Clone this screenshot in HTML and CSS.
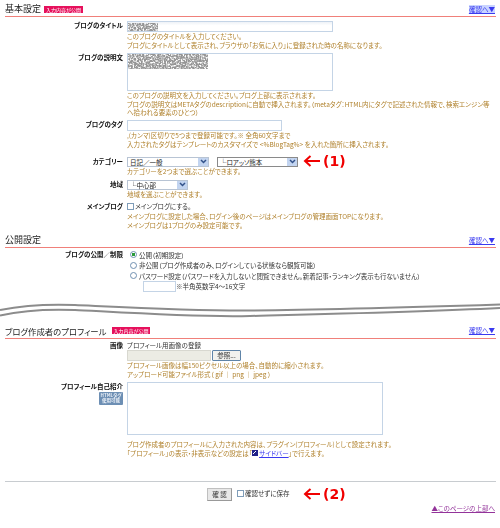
FILE: index.html
```html
<!DOCTYPE html>
<html lang="ja">
<head>
<meta charset="utf-8">
<title>基本設定</title>
<link rel="stylesheet" href="styles.css">
</head>
<body>
<div class="page">
  <div class="head h1"><h2>基本設定</h2><span class="badge">入力内容が公開</span><a class="more hl" href="#">確認へ▼</a></div>

  <div class="row r-title"><div class="lab">ブログのタイトル</div><div class="val">
    <div class="field f-title"><svg class="noise n1" width="30" height="8"><rect width="30" height="8" filter="url(#nz)"/></svg></div>
    <p class="hint">このブログのタイトルを入力してください。<br>ブログにタイトルとして表示され、ブラウザの「お気に入り」に登録された時の名称になります。</p>
  </div></div>

  <div class="row r-desc"><div class="lab">ブログの説明文</div><div class="val">
    <div class="field f-desc"><svg class="noise n2" width="80" height="15"><rect width="80" height="15" filter="url(#nz)"/></svg></div>
    <p class="hint">このブログの説明文を入力してください。ブログ上部に表示されます。<br>ブログの説明文はMETAタグのdescriptionに自動で挿入されます。（metaタグ：HTML内にタグで記述された情報で、検索エンジン等<br>へ拾われる要素のひとつ）</p>
  </div></div>

  <div class="row r-tag"><div class="lab">ブログのタグ</div><div class="val">
    <div class="field f-tag"></div>
    <p class="hint">,(カンマ)区切りで5つまで登録可能です。※ 全角60文字まで<br>入力されたタグはテンプレートのカスタマイズで &lt;%BlogTag%&gt; を入れた箇所に挿入されます。</p>
  </div></div>

  <div class="row r-cat"><div class="lab">カテゴリー</div><div class="val">
    <div class="selects">
      <div class="sel s-a"><span>日記／一般</span><i><svg width="7" height="5"><path d="M1 1l2.500 2.500L6 1" fill="none" stroke="#33528a" stroke-width="1.500"/></svg></i></div>
      <div class="sel s-b"><span>└ロアッソ熊本</span><i><svg width="7" height="5"><path d="M1 1l2.500 2.500L6 1" fill="none" stroke="#33528a" stroke-width="1.500"/></svg></i></div>
    </div>
    <p class="hint">カテゴリーを2つまで選ぶことができます。</p>
    <div class="note n-one"><svg width="18" height="12" viewBox="0 0 18 12"><path d="M17 6H3M7.500 1L2 6l5.500 5" fill="none" stroke="#f00000" stroke-width="2"/></svg><b>(1)</b></div>
  </div></div>

  <div class="row r-area"><div class="lab">地域</div><div class="val">
    <div class="sel s-c"><span>└中心部</span><i><svg width="7" height="5"><path d="M1 1l2.500 2.500L6 1" fill="none" stroke="#33528a" stroke-width="1.500"/></svg></i></div>
    <p class="hint">地域を選ぶことができます。</p>
  </div></div>

  <div class="row r-main"><div class="lab">メインブログ</div><div class="val">
    <div class="check"><span class="box"></span>メインブログにする。</div>
    <p class="hint">メインブログに設定した場合、ログイン後のページはメインブログの管理画面TOPになります。<br>メインブログは1ブログのみ設定可能です。</p>
  </div></div>

  <div class="head h2"><h2>公開設定</h2><a class="more" href="#">確認へ▼</a></div>

  <div class="row r-pub"><div class="lab">ブログの公開／制限</div><div class="val">
    <div class="radio"><span class="dot on"></span>公開（初期設定）</div>
    <div class="radio"><span class="dot"></span>非公開（ブログ作成者のみ、ログインしている状態なら観覧可能）</div>
    <div class="radio"><span class="dot"></span>パスワード設定（パスワードを入力しないと閲覧できません。新着記事・ランキング表示も行ないません）</div>
    <div class="pass"><div class="field f-pass"></div>※半角英数字4～16文字</div>
  </div></div>

  <svg class="wave" width="500" height="16" viewBox="0 0 500 16">
    <path d="M0 7C20 3 50 1 75 2S190 8 250 7.500 420 4 500 1.500" fill="none" stroke="#8c8c8c" stroke-width="2"/>
    <path d="M0 12.500C20 8 50 6 75 7S190 14.500 250 13 420 9 500 5" fill="none" stroke="#8c8c8c" stroke-width="2"/>
  </svg>

  <div class="head h3"><h2>ブログ作成者のプロフィール</h2><span class="badge">入力内容が公開</span><a class="more" href="#">確認へ▼</a></div>

  <div class="row r-img"><div class="lab">画像</div><div class="val">
    <div class="plain">プロフィール用画像の登録</div>
    <div class="file"><div class="file-box"></div><div class="browse">参照...</div></div>
    <p class="hint">プロフィール画像は幅150ピクセル以上の場合、自動的に縮小されます。<br>アップロード可能ファイル形式（ gif ｜ png ｜ jpeg ）</p>
  </div></div>

  <div class="row r-bio"><div class="lab">プロフィール自己紹介<div class="html-tag">HTMLタグ<br>使用可能</div></div><div class="val">
    <div class="field f-bio"></div>
    <p class="hint h-bio">ブログ作成者のプロフィールに入力された内容は、プラグイン(プロフィール)として設定されます。<br>「プロフィール」の表示・非表示などの設定は「<svg class="mini" width="6" height="6"><rect width="6" height="6" fill="#22228a"/><path d="M1 4l3-3" stroke="#fff"/></svg><a href="#">サイドバー</a>」で行えます。</p>
  </div></div>

  <div class="actions">
    <div class="submit">確 認</div>
    <div class="check skip"><span class="box"></span>確認せずに保存</div>
    <div class="note n-two"><svg width="18" height="12" viewBox="0 0 18 12"><path d="M17 6H3M7.500 1L2 6l5.500 5" fill="none" stroke="#f00000" stroke-width="2"/></svg><b>(2)</b></div>
  </div>
  <div class="top"><a href="#">▲このページの上部へ</a></div>
</div>
<svg class="defs" width="0" height="0"><filter id="nz" x="0" y="0" width="100%" height="100%"><feTurbulence type="fractalNoise" baseFrequency="0.6" numOctaves="2" seed="4"/><feColorMatrix values="0 0 0 0 0.3  0 0 0 0 0.3  0 0 0 0 0.3  3.500 0 0 0 -1"/></filter></svg>
</body>
</html>
```

FILE: styles.css
```css
* { box-sizing: border-box; }
html, body { margin: 0; padding: 0; background: #fff; }
body { font-family: "Noto Sans CJK JP", "Noto Sans", sans-serif; font-size: 6.500px; line-height: 8.500px; color: #333; font-feature-settings: "palt"; }
.page { width: 500px; height: 528px; padding: 0 4px 0 5px; overflow: hidden; filter: blur(0.25px); }
.defs { position: absolute; }
p { margin: 0; }
a { color: #3a3af0; }

.head { display: flex; align-items: center; height: 12px; border-bottom: 1px solid #f0807a; gap: 3px; box-sizing: content-box; padding-bottom: 1px; }
.head h2 { margin: 0; font-size: 9px; line-height: 12px; font-weight: 400; color: #222; }
.h1 { margin-top: 3px; }
.h2 { margin-top: 5px; }
.h3 { margin-top: 6px; }
.h3 h2 { font-size: 8.400px; }
.h3 .badge { margin-left: 2px; }
.badge { background: #e6105c; color: #fff; font-size: 5px; line-height: 7px; height: 7px; padding: 0 2px; }
.more { margin-left: auto; font-size: 6.500px; line-height: 9px; margin-right: 1px; }
.hl { background: #c9d4ff; }

.row { display: grid; grid-template-columns: 118px 1fr; column-gap: 4px; }
.lab { text-align: right; font-weight: 700; color: #111; font-size: 6.500px; line-height: 8px; }
.val { position: relative; min-width: 0; }
.hint { color: #b0812c; white-space: nowrap; margin-top: 0.500px; }
.h-bio { margin-top: 5px; }

.field { position: relative; background: #fff; border: 1px solid #c4d4e6; }
.noise { position: absolute; display: block; left: 0; top: 0; }
.n1 { top: 1px; }
.f-title { width: 206px; height: 11px; background: linear-gradient(#eef2f7, #fff 40%); }
.f-desc { width: 206px; height: 38px; }
.f-tag { width: 155px; height: 11px; }
.f-pass { width: 33px; height: 11px; }
.f-bio { width: 256px; height: 53px; }

.r-title { margin-top: 3.500px; }
.r-desc { margin-top: 3.500px; }
.r-tag { margin-top: 3px; }
.r-cat { margin-top: 8.500px; }
.r-area { margin-top: 4px; }
.r-main { margin-top: 3px; }
.r-pub { margin-top: 1.500px; }
.r-img { margin-top: 2px; }
.r-bio { margin-top: 4px; }

.selects { display: flex; gap: 8px; }
.sel { display: flex; align-items: center; justify-content: space-between; height: 10px; border: 1px solid #b8c4d4; background: #fff; color: #222; line-height: 8px; padding-left: 2px; }
.sel i { display: flex; align-items: center; justify-content: center; width: 10px; height: 8px; background: #c2d4f0; }
.s-a { width: 82px; }
.s-b { width: 81px; border-color: #8a8a8a; }
.s-c { width: 61px; }

.check, .radio, .plain { display: flex; align-items: center; color: #333; white-space: nowrap; }
.check { height: 10px; }
.box { flex: none; width: 7px; height: 7px; border: 1px solid #7f9db9; background: #fff; margin-right: 1px; }
.radio { height: 10.500px; padding-left: 3px; gap: 2px; }
.dot { flex: none; width: 7px; height: 7px; border-radius: 50%; border: 1px solid #6f8fb0; background: #fff; }
.dot.on { background: radial-gradient(#2a9a3a 0 1.500px, #fff 2px); }
.pass { display: flex; align-items: center; padding-left: 16px; color: #333; }

.wave { display: block; margin: 10.500px 0 0 -5px; }

.plain { height: 9px; }
.file { display: flex; gap: 1px; }
.file-box { width: 84px; height: 11px; background: #ecece4; border: 1px solid #d8d8d0; }
.browse { width: 29px; height: 11px; border: 1px solid #5f84a8; border-radius: 1px; background: #f2f2ee; text-align: center; line-height: 9px; color: #333; }

.html-tag { width: 24px; margin: 1.500px 0 0 auto; background: #6d8fb4; color: #e8eef6; font-size: 4.500px; line-height: 5.500px; padding: 1px 0; text-align: center; border-radius: 1px; font-weight: 700; }
.mini { margin-right: 1px; vertical-align: -0.500px; }

.actions { position: relative; display: flex; align-items: flex-start; height: 23px; margin-top: 24px; border-top: 1px solid #c8ccd0; padding: 6px 0 0 202px; gap: 5px; }
.submit { width: 25px; height: 13px; background: #e8e8e8; border: 1px solid #c0c0c0; border-bottom-color: #999; border-right-color: #999; text-align: center; line-height: 11px; color: #333; }
.skip { margin-top: 0; }
.note { position: absolute; display: flex; align-items: center; gap: 2px; color: #f00000; }
.note b { font-family: "DejaVu Sans", sans-serif; font-size: 14px; line-height: 14px; font-weight: 700; }
.n-one { left: 176px; top: -2.500px; }
.n-two { left: 298px; top: 5px; }
.top { text-align: right; font-size: 6.500px; line-height: 9px; padding-right: 1px; }
.top a { color: #93339a; }
```
